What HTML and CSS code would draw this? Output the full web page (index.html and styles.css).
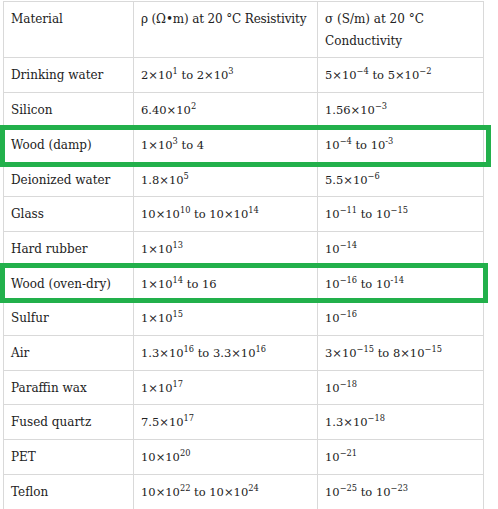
FILE: index.html
```html
<!DOCTYPE html>
<html>
<head>
<meta charset="utf-8">
<link rel="stylesheet" href="styles.css">
</head>
<body>
<div class="page">
  <table class="data">
    <colgroup><col class="c1"><col class="c2"><col class="c3"></colgroup>
    <tr class="head"><td>Material</td><td class="nowrap">ρ (Ω•m) at 20 °C Resistivity</td><td>σ (S/m) at 20 °C Conductivity</td></tr>
    <tr><td>Drinking water</td><td class="num">2×10<sup>1</sup> to 2×10<sup>3</sup></td><td class="num">5×10<sup>−4</sup> to 5×10<sup>−2</sup></td></tr>
    <tr><td>Silicon</td><td class="num">6.40×10<sup>2</sup></td><td class="num">1.56×10<sup>−3</sup></td></tr>
    <tr><td>Wood (damp)</td><td class="num">1×10<sup>3</sup> to 4</td><td class="num">10<sup>−4</sup> to 10<sup>-3</sup></td></tr>
    <tr><td>Deionized water</td><td class="num">1.8×10<sup>5</sup></td><td class="num">5.5×10<sup>−6</sup></td></tr>
    <tr><td>Glass</td><td class="num">10×10<sup>10</sup> to 10×10<sup>14</sup></td><td class="num">10<sup>−11</sup> to 10<sup>−15</sup></td></tr>
    <tr><td>Hard rubber</td><td class="num">1×10<sup>13</sup></td><td class="num">10<sup>−14</sup></td></tr>
    <tr><td>Wood (oven-dry)</td><td class="num">1×10<sup>14</sup> to 16</td><td class="num">10<sup>−16</sup> to 10<sup>-14</sup></td></tr>
    <tr><td>Sulfur</td><td class="num">1×10<sup>15</sup></td><td class="num">10<sup>−16</sup></td></tr>
    <tr><td>Air</td><td class="num">1.3×10<sup>16</sup> to 3.3×10<sup>16</sup></td><td class="num">3×10<sup>−15</sup> to 8×10<sup>−15</sup></td></tr>
    <tr><td>Paraffin wax</td><td class="num">1×10<sup>17</sup></td><td class="num">10<sup>−18</sup></td></tr>
    <tr><td>Fused quartz</td><td class="num">7.5×10<sup>17</sup></td><td class="num">1.3×10<sup>−18</sup></td></tr>
    <tr><td>PET</td><td class="num">10×10<sup>20</sup></td><td class="num">10<sup>−21</sup></td></tr>
    <tr><td>Teflon</td><td class="num">10×10<sup>22</sup> to 10×10<sup>24</sup></td><td class="num">10<sup>−25</sup> to 10<sup>−23</sup></td></tr>
  </table>
  <div class="mark mark-damp"></div>
  <div class="mark mark-dry"></div>
</div>
</body>
</html>
```
FILE: styles.css
```css
html, body {
  margin: 0;
  padding: 0;
  background: #ffffff;
}
.page {
  position: relative;
  width: 498px;
  height: 509px;
  overflow: hidden;
  padding: 1px 0 0 3px;
  box-sizing: border-box;
}
.data {
  border-collapse: collapse;
  table-layout: fixed;
  width: 480px;
  font-family: "DejaVu Serif", "Liberation Serif", serif;
  font-size: 12px;
  color: #222222;
}
.c1 { width: 130px; }
.c2 { width: 184px; }
.c3 { width: 166px; }
.data td {
  border: 1px solid #d9d9d9;
  padding: 7px 7px 5px;
  line-height: 21.7px;
  vertical-align: top;
  text-align: left;
}
.data td.nowrap {
  white-space: nowrap;
  letter-spacing: -0.15px;
}
.data td.num {
  font-size: 11.5px;
}
.data sup {
  font-size: 72%;
  line-height: 0;
  vertical-align: 0.55em;
}
.mark {
  position: absolute;
  left: 0;
  border: 5px solid #22b04b;
  box-sizing: border-box;
}
.mark-damp {
  top: 125px;
  width: 491px;
  height: 42px;
}
.mark-dry {
  top: 263px;
  width: 488px;
  height: 40px;
}
```
